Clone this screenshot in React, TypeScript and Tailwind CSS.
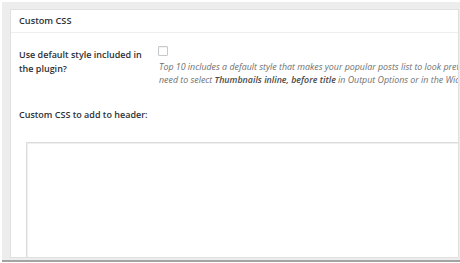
import React from 'react';

const font = { fontFamily: '"Open Sans", "Noto Sans", sans-serif' };

export default function App() {
  return (
    <div className="w-[460px] h-[263px] bg-white pl-[2px] pt-[2px] overflow-hidden" style={font}>
      <div className="h-[260px] bg-[#ededed] border-b-2 border-[#a3a3a3] pl-[8px] pt-[7px] pr-[1px] pb-[2px]">
        <div className="h-full bg-white border border-[#e0e0e0] overflow-hidden">
          {/* Header */}
          <div className="h-[23px] border-b border-[#eeeeee] pl-[8px] flex items-center">
            <span className="text-[9.2px] font-semibold text-[#2c3136]">Custom CSS</span>
          </div>

          {/* Default style row */}
          <div className="flex items-start pl-[8px] pt-[13px]">
            <div className="w-[139px] shrink-0 pt-[2px] text-[9px] leading-[14px] font-semibold text-[#2c3136]">
              Use default style included in the plugin?
            </div>
            <div className="flex flex-col">
              <div className="w-[10px] h-[10px] border border-[#c5c9cc] bg-white rounded-[1px] shadow-[inset_0_1px_1px_rgba(0,0,0,0.06)]" />
              <div className="mt-[5px] pl-[1px] text-[8.85px] leading-[13px] italic text-[#707070] whitespace-nowrap">
                <div>Top 10 includes a default style that makes your popular posts list to look pretty.</div>
                <div>
                  need to select <b className="font-semibold text-[#4a4a4a]">Thumbnails inline, before title</b> in Output Options or in the Widget.
                </div>
              </div>
            </div>
          </div>

          {/* Custom CSS label */}
          <div className="pl-[8px] pt-[21px] text-[9px] leading-[14px] font-semibold text-[#2c3136]">
            Custom CSS to add to header:
          </div>

          {/* Textarea */}
          <div className="pl-[15px] pt-[20px]">
            <div className="w-[500px] h-[130px] border border-[#dcdcdc] bg-white shadow-[inset_1px_1px_1px_rgba(0,0,0,0.07)]" />
          </div>
        </div>
      </div>
    </div>
  );
}
